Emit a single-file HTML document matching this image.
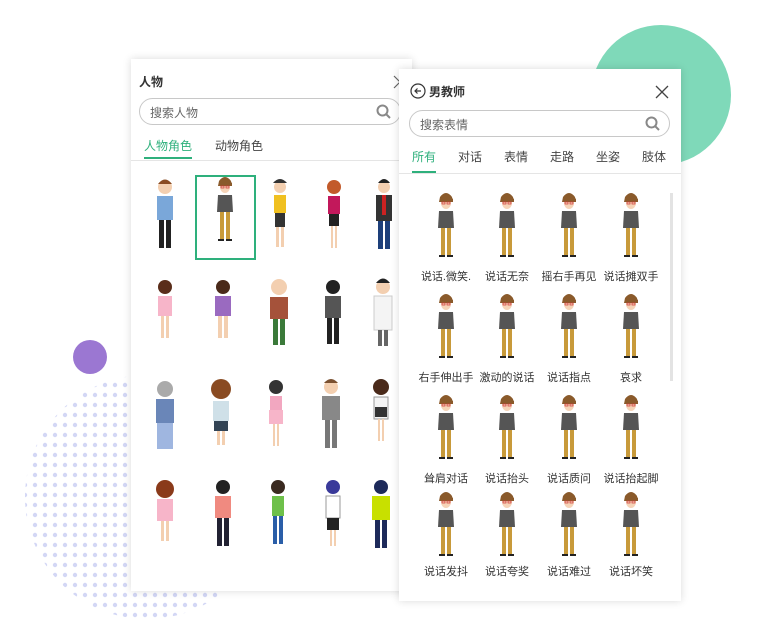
<!DOCTYPE html>
<html><head><meta charset="utf-8"><style>
*{margin:0;padding:0;box-sizing:border-box}
body{width:766px;height:627px;background:#fff;position:relative;overflow:hidden;font-family:"Liberation Sans","Noto Sans CJK SC",sans-serif}
.abs{position:absolute}
.panel{position:absolute;background:#fff;box-shadow:0 0 8px rgba(0,0,0,.15)}
.search{position:absolute;height:27px;border:1px solid #c8c8c8;border-radius:14px;font-size:12px;color:#666;padding:5px 0 0 10px}
.tab{position:absolute;font-size:12px;color:#444}
.lbl{position:absolute;font-size:11px;color:#333;width:70px;text-align:center}
</style></head><body>
<svg class="abs" style="left:0;top:0" width="766" height="627">
<defs>
<pattern id="d" width="10" height="10" patternUnits="userSpaceOnUse"><circle cx="5" cy="5" r="2.2" fill="#d3d7f5"/></pattern>
<g id="t">
<path d="M-6 2 q6-8 12 0 l1 5 -14 0z" fill="#8a5a2b"/>
<ellipse cx="0" cy="8" rx="5" ry="6" fill="#f6d4b8"/>
<path d="M-6 3 q6-6 13 1 l0 3 -13 0z" fill="#8a5a2b"/>
<rect x="-4" y="7" width="3" height="2" fill="none" stroke="#c33" stroke-width=".7"/><rect x="1" y="7" width="3" height="2" fill="none" stroke="#c33" stroke-width=".7"/>
<path d="M-7 16 h14 l1 17 h-16z" fill="#555"/>
<rect x="-5" y="33" width="4" height="28" fill="#c89a3a"/><rect x="1" y="33" width="4" height="28" fill="#c89a3a"/>
<rect x="-7" y="60" width="6" height="2" fill="#222"/><rect x="1" y="60" width="6" height="2" fill="#222"/>
</g>
</defs>
<circle cx="147" cy="497" r="122" fill="url(#d)"/>
<circle cx="90" cy="357" r="17" fill="#9b77d2"/>
<circle cx="661" cy="95" r="70" fill="#7fd9b9"/>
</svg>

<div class="panel" style="left:131px;top:59px;width:281px;height:532px">
<div class="abs" style="left:8px;top:14px;font-size:12px;font-weight:bold;color:#333">人物</div>
<svg class="abs" style="left:261px;top:16px" width="10" height="14"><path d="M2 1l6 6-6 6" fill="none" stroke="#666" stroke-width="1.2"/></svg>
<div class="search" style="left:8px;top:39px;width:262px">搜索人物
<svg class="abs" style="right:8px;top:5px" width="16" height="16"><circle cx="6.5" cy="6.5" r="5" fill="none" stroke="#888" stroke-width="2"/><path d="M10 10 l4 4" stroke="#888" stroke-width="2"/></svg></div>
<div class="tab" style="left:13px;top:78px;color:#2eb07c">人物角色</div>
<div class="tab" style="left:84px;top:78px">动物角色</div>
<div class="abs" style="left:13px;top:98px;width:48px;height:2px;background:#2eb07c"></div>
<div class="abs" style="left:0;top:101px;width:281px;height:1px;background:#e5e5e5"></div>
<div class="abs" style="left:64px;top:116px;width:61px;height:85px;border:2px solid #2eb07c"></div>
<svg class="abs" style="left:0;top:110px" width="281" height="400">
<g fill="none">
<g transform="translate(34,10)"><circle cx="0" cy="8" r="7" fill="#f3cfb0"/><path d="M-7 5q7-9 14 0" fill="#8a4b22"/><rect x="-8" y="17" width="16" height="24" fill="#7aa7d9"/><rect x="-6" y="41" width="5" height="28" fill="#222"/><rect x="1" y="41" width="5" height="28" fill="#222"/></g>
<g transform="translate(94,10)"><use href="#t"/></g>
<g transform="translate(149,10)"><circle cx="0" cy="8" r="6" fill="#f3cfb0"/><path d="M-7 4q7-8 14 0" fill="#333"/><rect x="-6" y="16" width="12" height="18" fill="#f0c020"/><rect x="-5" y="34" width="10" height="14" fill="#333"/><rect x="-4" y="48" width="3" height="20" fill="#f3cfb0"/><rect x="1" y="48" width="3" height="20" fill="#f3cfb0"/></g>
<g transform="translate(203,10)"><circle cx="0" cy="8" r="7" fill="#c25a2a"/><rect x="-6" y="17" width="12" height="18" fill="#c2185b"/><rect x="-5" y="35" width="10" height="12" fill="#222"/><rect x="-3" y="47" width="2" height="22" fill="#f3cfb0"/><rect x="1" y="47" width="2" height="22" fill="#f3cfb0"/></g>
<g transform="translate(253,10)"><circle cx="0" cy="8" r="6" fill="#f3cfb0"/><path d="M-6 4q6-8 12 0" fill="#222"/><rect x="-8" y="16" width="16" height="26" fill="#333"/><rect x="-2" y="16" width="4" height="20" fill="#c22"/><rect x="-6" y="42" width="5" height="28" fill="#1d3f7a"/><rect x="1" y="42" width="5" height="28" fill="#1d3f7a"/></g>
<g transform="translate(34,110)"><circle cx="0" cy="8" r="7" fill="#5a2d1a"/><rect x="-7" y="17" width="14" height="20" fill="#f7b5c9"/><rect x="-4" y="37" width="3" height="22" fill="#f3cfb0"/><rect x="1" y="37" width="3" height="22" fill="#f3cfb0"/></g>
<g transform="translate(92,110)"><circle cx="0" cy="8" r="7" fill="#4a2a1a"/><rect x="-8" y="17" width="16" height="20" fill="#9a6ac0"/><rect x="-5" y="37" width="4" height="22" fill="#f3cfb0"/><rect x="1" y="37" width="4" height="22" fill="#f3cfb0"/></g>
<g transform="translate(148,110)"><circle cx="0" cy="8" r="8" fill="#f3cfb0"/><rect x="-9" y="18" width="18" height="22" fill="#a5523a"/><rect x="-6" y="40" width="5" height="26" fill="#3b7a3a"/><rect x="1" y="40" width="5" height="26" fill="#3b7a3a"/></g>
<g transform="translate(202,110)"><circle cx="0" cy="8" r="7" fill="#222"/><rect x="-8" y="17" width="16" height="22" fill="#555"/><rect x="-6" y="39" width="5" height="26" fill="#222"/><rect x="1" y="39" width="5" height="26" fill="#222"/></g>
<g transform="translate(252,110)"><circle cx="0" cy="8" r="7" fill="#f3cfb0"/><path d="M-7 4q7-9 14 0" fill="#222"/><rect x="-9" y="17" width="18" height="34" fill="#f4f4f4" stroke="#ccc"/><rect x="-5" y="51" width="4" height="16" fill="#666"/><rect x="1" y="51" width="4" height="16" fill="#666"/></g>
<g transform="translate(34,210)"><circle cx="0" cy="10" r="8" fill="#aaa"/><rect x="-9" y="20" width="18" height="24" fill="#6a86b8"/><rect x="-8" y="44" width="16" height="26" fill="#9fb6e0"/></g>
<g transform="translate(90,210)"><circle cx="0" cy="10" r="10" fill="#8a4b22"/><rect x="-8" y="22" width="16" height="20" fill="#cfe0e8"/><rect x="-7" y="42" width="14" height="10" fill="#345"/><rect x="-4" y="52" width="3" height="14" fill="#f3cfb0"/><rect x="1" y="52" width="3" height="14" fill="#f3cfb0"/></g>
<g transform="translate(145,210)"><circle cx="0" cy="8" r="7" fill="#333"/><rect x="-6" y="17" width="12" height="14" fill="#f2a7c0"/><rect x="-7" y="31" width="14" height="14" fill="#f7b5c9"/><rect x="-3" y="45" width="2" height="22" fill="#f3cfb0"/><rect x="1" y="45" width="2" height="22" fill="#f3cfb0"/></g>
<g transform="translate(200,210)"><circle cx="0" cy="8" r="7" fill="#f3cfb0"/><path d="M-7 4q7-8 14 0" fill="#7a5030"/><rect x="-9" y="17" width="18" height="24" fill="#888"/><rect x="-6" y="41" width="5" height="28" fill="#777"/><rect x="1" y="41" width="5" height="28" fill="#777"/></g>
<g transform="translate(250,210)"><circle cx="0" cy="8" r="8" fill="#4a2a1a"/><rect x="-7" y="18" width="14" height="22" fill="#f4f4f4" stroke="#999"/><rect x="-6" y="28" width="12" height="10" fill="#333"/><rect x="-3" y="40" width="2" height="22" fill="#f3cfb0"/><rect x="1" y="40" width="2" height="22" fill="#f3cfb0"/></g>
<g transform="translate(34,310)"><circle cx="0" cy="10" r="9" fill="#8a3a1a"/><rect x="-8" y="20" width="16" height="22" fill="#f7b5c9"/><rect x="-4" y="42" width="3" height="20" fill="#f3cfb0"/><rect x="1" y="42" width="3" height="20" fill="#f3cfb0"/></g>
<g transform="translate(92,310)"><circle cx="0" cy="8" r="7" fill="#222"/><rect x="-8" y="17" width="16" height="22" fill="#f08a80"/><rect x="-6" y="39" width="5" height="28" fill="#223"/><rect x="1" y="39" width="5" height="28" fill="#223"/></g>
<g transform="translate(147,310)"><circle cx="0" cy="8" r="7" fill="#3a2a20"/><rect x="-6" y="17" width="12" height="20" fill="#6ec04a"/><rect x="-5" y="37" width="4" height="28" fill="#2a5ea8"/><rect x="1" y="37" width="4" height="28" fill="#2a5ea8"/></g>
<g transform="translate(202,310)"><circle cx="0" cy="8" r="7" fill="#3a3a9a"/><rect x="-7" y="17" width="14" height="22" fill="#fff" stroke="#999"/><rect x="-6" y="39" width="12" height="12" fill="#222"/><rect x="-3" y="51" width="2" height="16" fill="#f3cfb0"/><rect x="1" y="51" width="2" height="16" fill="#f3cfb0"/></g>
<g transform="translate(250,310)"><circle cx="0" cy="8" r="7" fill="#1d2a5a"/><rect x="-9" y="17" width="18" height="24" fill="#c8e000"/><rect x="-6" y="41" width="5" height="28" fill="#1d2a5a"/><rect x="1" y="41" width="5" height="28" fill="#1d2a5a"/></g>
</g></svg>
</div>

<div class="panel" style="left:399px;top:69px;width:282px;height:532px">
<svg class="abs" style="left:11px;top:14px" width="16" height="16"><circle cx="8" cy="8" r="7" fill="none" stroke="#333" stroke-width="1.2"/><path d="M11 8H5M7.5 5.5L5 8l2.5 2.5" fill="none" stroke="#333" stroke-width="1.2"/></svg>
<div class="abs" style="left:30px;top:14px;font-size:12px;font-weight:bold;color:#333">男教师</div>
<svg class="abs" style="left:256px;top:16px" width="14" height="14"><path d="M1 1L13 13M13 1L1 13" stroke="#444" stroke-width="1.3"/></svg>
<div class="search" style="left:10px;top:41px;width:261px">搜索表情
<svg class="abs" style="right:8px;top:5px" width="16" height="16"><circle cx="6.5" cy="6.5" r="5" fill="none" stroke="#888" stroke-width="2"/><path d="M10 10 l4 4" stroke="#888" stroke-width="2"/></svg></div>
<div class="tab" style="left:13px;top:79px;color:#2eb07c">所有</div>
<div class="tab" style="left:59px;top:79px">对话</div>
<div class="tab" style="left:105px;top:79px">表情</div>
<div class="tab" style="left:151px;top:79px">走路</div>
<div class="tab" style="left:197px;top:79px">坐姿</div>
<div class="tab" style="left:243px;top:79px">肢体</div>
<div class="abs" style="left:13px;top:102px;width:24px;height:2px;background:#2eb07c"></div>
<div class="abs" style="left:0;top:104px;width:282px;height:1px;background:#e5e5e5"></div>
<div class="abs" style="left:271px;top:124px;width:3px;height:188px;background:#e3e3e3"></div>
<svg class="abs" style="left:0;top:0" width="282" height="532">
<g transform="translate(47,126)"><use href="#t"/></g><g transform="translate(108,126)"><use href="#t"/></g><g transform="translate(170,126)"><use href="#t"/></g><g transform="translate(232,126)"><use href="#t"/></g>
<g transform="translate(47,227)"><use href="#t"/></g><g transform="translate(108,227)"><use href="#t"/></g><g transform="translate(170,227)"><use href="#t"/></g><g transform="translate(232,227)"><use href="#t"/></g>
<g transform="translate(47,328)"><use href="#t"/></g><g transform="translate(108,328)"><use href="#t"/></g><g transform="translate(170,328)"><use href="#t"/></g><g transform="translate(232,328)"><use href="#t"/></g>
<g transform="translate(47,425)"><use href="#t"/></g><g transform="translate(108,425)"><use href="#t"/></g><g transform="translate(170,425)"><use href="#t"/></g><g transform="translate(232,425)"><use href="#t"/></g>
</svg>
<div class="lbl" style="left:12px;top:199px">说话.微笑.</div><div class="lbl" style="left:73px;top:199px">说话无奈</div><div class="lbl" style="left:135px;top:199px">摇右手再见</div><div class="lbl" style="left:197px;top:199px">说话摊双手</div>
<div class="lbl" style="left:12px;top:300px">右手伸出手</div><div class="lbl" style="left:73px;top:300px">激动的说话</div><div class="lbl" style="left:135px;top:300px">说话指点</div><div class="lbl" style="left:197px;top:300px">哀求</div>
<div class="lbl" style="left:12px;top:401px">耸肩对话</div><div class="lbl" style="left:73px;top:401px">说话抬头</div><div class="lbl" style="left:135px;top:401px">说话质问</div><div class="lbl" style="left:197px;top:401px">说话抬起脚</div>
<div class="lbl" style="left:12px;top:494px">说话发抖</div><div class="lbl" style="left:73px;top:494px">说话夸奖</div><div class="lbl" style="left:135px;top:494px">说话难过</div><div class="lbl" style="left:197px;top:494px">说话坏笑</div>
</div>
</body></html>
